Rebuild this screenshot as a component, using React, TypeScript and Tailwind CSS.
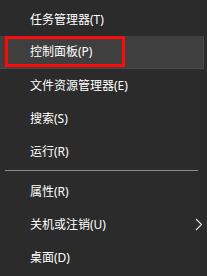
const font = { fontFamily: '"Noto Sans", "Noto Sans CJK SC", sans-serif' };

type Item = { label: string; active?: boolean; sub?: boolean };

const top: Item[] = [
  { label: "任务管理器(T)" },
  { label: "控制面板(P)", active: true },
  { label: "文件资源管理器(E)" },
  { label: "搜索(S)" },
  { label: "运行(R)" },
];

const bottom: Item[] = [
  { label: "属性(R)" },
  { label: "关机或注销(U)", sub: true },
  { label: "桌面(D)" },
];

function Row({ item }: { item: Item }) {
  return (
    <div
      className={`relative flex h-[33px] items-center pl-[30px] pr-[4px] text-[12px] text-white ${
        item.active ? "bg-[#3f3f3f] border-r border-b border-[#4a4a4a] mr-[3px]" : ""
      }`}
    >
      <span className="flex-1 leading-none">{item.label}</span>
      {item.sub && (
        <svg width="8" height="13" viewBox="0 0 8 13">
          <path d="M1 1 L6.5 6.5 L1 12" fill="none" stroke="#e6e6e6" strokeWidth="1.1" />
        </svg>
      )}
      {item.active && (
        <div className="absolute left-[5px] top-0 h-[31px] w-[120px] border-[3px] border-[#ff0a0a]" />
      )}
    </div>
  );
}

export default function App() {
  return (
    <div className="h-[276px] w-[207px] overflow-hidden bg-[#2b2b2b] pt-[3px]" style={font}>
      {top.map((item) => (
        <Row key={item.label} item={item} />
      ))}
      <div className="ml-[5px] mr-[9px] mt-[2px] mb-[4px] h-px bg-[#8c8c8c]" />
      {bottom.map((item) => (
        <Row key={item.label} item={item} />
      ))}
    </div>
  );
}
